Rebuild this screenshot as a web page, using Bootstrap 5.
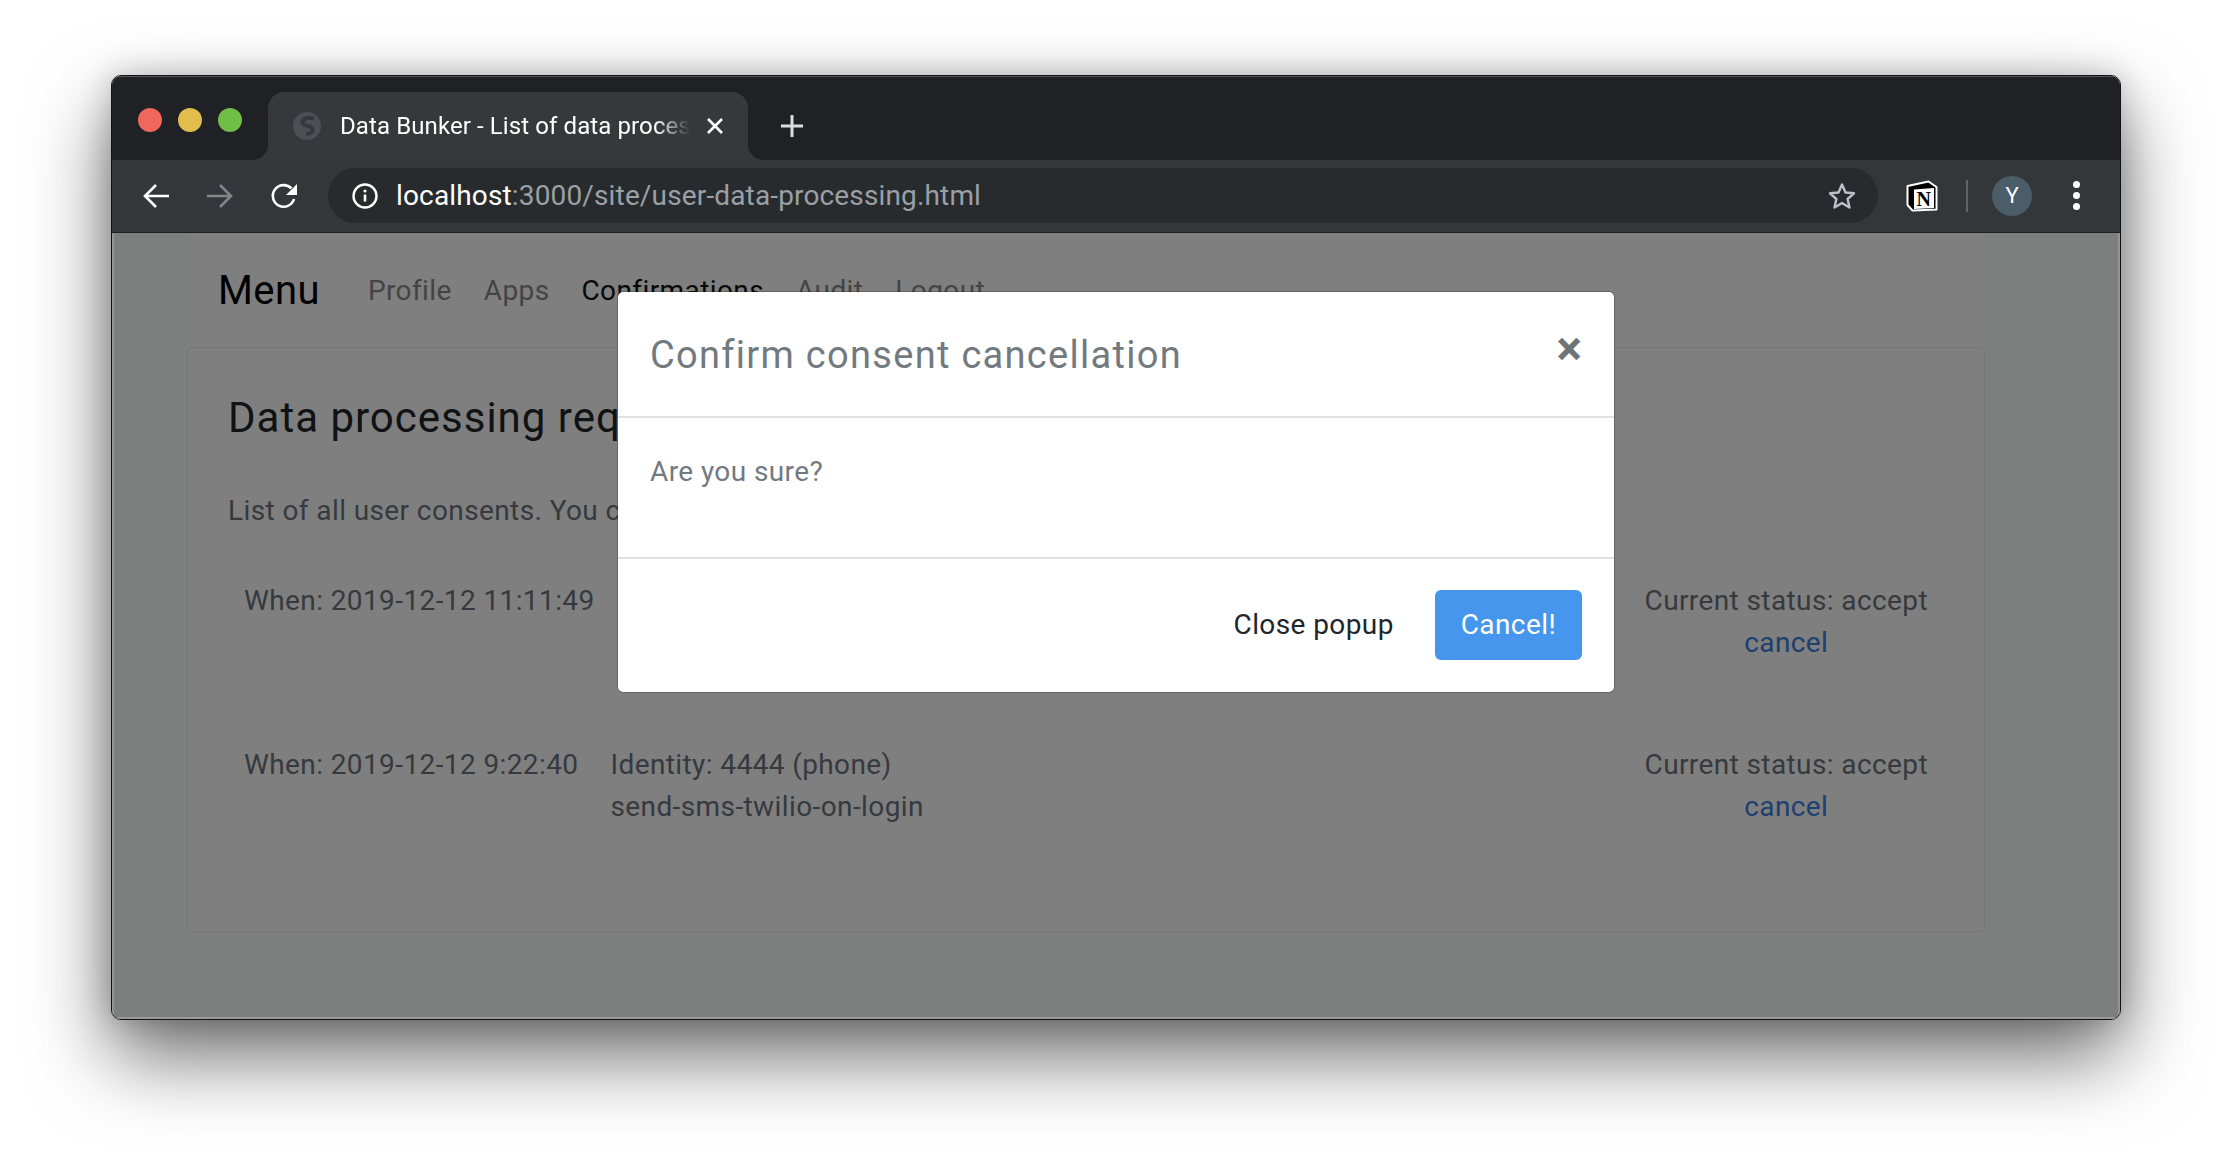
<!DOCTYPE html>
<html lang="en">
<head>
  <meta charset="UTF-8" />
  <title>Data Bunker - List of data processing</title>
  <link rel="stylesheet" href="https://cdn.jsdelivr.net/npm/bootstrap@5.3.3/dist/css/bootstrap.min.css" />
  <style>
    body { background: #fff; font-family: Roboto, "Liberation Sans", sans-serif; font-size: 28px; letter-spacing: .4px; color: #6c757d; }
    .desk { padding: 75px 111px 148px; }
    .browser { height: 945px; border-radius: 10px; overflow: hidden; background: #fbfefd; border: 1px solid #111; box-shadow: 0 36px 80px rgba(0,0,0,.58), 0 0 32px rgba(0,0,0,.2); }
    .tabstrip { height: 84px; background: #202124; padding-top: 16px; box-shadow: inset 0 1px #55585b; }
    .lights { width: 156px; padding: 16px 0 0 26px; gap: 16px; }
    .lights span { width: 24px; height: 24px; border-radius: 50%; }
    .tabitem { position: relative; width: 480px; height: 68px; background: #35393c; border-radius: 16px 16px 0 0; color: #fff; font-size: 24px; letter-spacing: .1px; padding: 0 23px 0 25px; }
    .tabitem::before, .tabitem::after { content: ""; position: absolute; bottom: 0; width: 16px; height: 16px; }
    .tabitem::before { left: -16px; background: radial-gradient(circle at 0 0, #202124 16px, #35393c 16.5px); }
    .tabitem::after { right: -16px; background: radial-gradient(circle at 100% 0, #202124 16px, #35393c 16.5px); }
    .tabtitle { width: 350px; white-space: nowrap; overflow: hidden; margin-left: 19px; -webkit-mask-image: linear-gradient(90deg, #000 90%, transparent); mask-image: linear-gradient(90deg, #000 90%, transparent); }
    .plusbtn { margin-left: 32px; }
    .toolbar { height: 73px; background: #33373a; border-bottom: 1px solid #1d1f21; padding: 8px 0 9px 12px; }
    .toolslot { width: 64px; }
    .addressbar { width: 1550px; height: 55px; border-radius: 28px; background: #282b2e; padding: 0 21px 0 24px; margin-left: 12px; font-size: 28px; letter-spacing: .15px; color: #9aa0a6; }
    .addressbar b { color: #fff; font-weight: 400; }
    .urlhost { margin: 1px 0 0 18px; }
    .notionslot { margin-left: 28px; }
    .sepline { width: 2px; height: 32px; background: #5f6368; margin-left: 28px; }
    .avatarchip { width: 40px; height: 40px; border-radius: 50%; background: #4a5d68; color: #fff; font-size: 22px; letter-spacing: 0; margin-left: 24px; }
    .dotsbox { margin-left: 41px; gap: 4px; }
    .dotsbox span { width: 7px; height: 7px; border-radius: 50%; background: #fff; }
    .pagearea { position: relative; height: 786px; padding: 0 135px 0 75px; overflow: hidden; }
    .topnav { height: 114px; background: #fff; padding: 2px 30px 0 31px; --bs-navbar-padding-y: 0; --bs-navbar-nav-link-padding-x: 16px; --bs-nav-link-padding-y: 0; }
    .topnav .navbar-brand { font-size: 40px; color: #000; margin-right: 32px; padding: 0; }
    .topnav .nav-link { color: #888; }
    .topnav .nav-link.active { color: #111; }
    .panel { height: 585px; --bs-card-border-color: #ececec; --bs-card-border-radius: 4px; }
    .panel .card-body { padding: 45px 40px 0; }
    .paneltitle { font-size: 42px; font-weight: 400; color: #212529; line-height: 1.2; margin: 0 0 47px; letter-spacing: 1px; }
    .panelnote { margin: 0 0 48px; line-height: 42px; }
    .consentrow { line-height: 42px; padding-bottom: 80px; }
    .consentrow a { color: #3f7fe0; text-decoration: none; }
    .dimlayer { position: absolute; inset: 0; background: rgba(0,0,0,.5); padding-top: 58px; box-shadow: inset 0 -2px #9a9a9a, inset 2px 0 #949494, inset -2px 0 #949494;
      --bs-modal-bg: #fff; --bs-modal-border-width: 1px; --bs-modal-border-color: rgba(0,0,0,.2); --bs-modal-border-radius: 6px; --bs-modal-inner-border-radius: 5px;
      --bs-modal-header-border-color: #dee2e6; --bs-modal-header-border-width: 2px; --bs-modal-footer-border-color: #dee2e6; --bs-modal-footer-border-width: 2px; --bs-modal-color: #72797f; }
    .popup { width: 998px; height: 402px; }
    .popup .modal-header { height: 126px; padding: 0 32px; align-items: flex-start; }
    .popup .modal-title { font-size: 38px; line-height: 1; color: #72797f; margin-top: 44px; letter-spacing: 1.3px; font-weight: 400; }
    .closex { background: none; border: 0; padding: 0; color: #6f7478; font-size: 48px; font-weight: 700; line-height: 1; margin-top: 33px; letter-spacing: 0; }
    .popup .modal-body { height: 139px; flex: none; padding: 33px 32px 0; line-height: 42px; }
    .popup .modal-footer { height: 133px; padding: 0 32px; gap: 27px; flex-wrap: nowrap; }
    .popup .modal-footer > * { margin: 0; }
    .popbtn { height: 70px; font-size: 28px; letter-spacing: .4px; padding: 0 26px; border: 0; border-radius: 6px; }
    .popbtn.btn-link { color: #212529; text-decoration: none; padding: 0 14px; }
    .popbtn.btn-primary { --bs-btn-bg: #4596ec; background: #4596ec; }
  </style>
</head>
<body>
  <div class="desk">
    <div class="browser d-flex flex-column">
      <div class="tabstrip d-flex">
        <div class="lights d-flex flex-shrink-0">
          <span style="background:#f1675d"></span>
          <span style="background:#e0bd4d"></span>
          <span style="background:#70bd48"></span>
        </div>
        <div class="tabitem d-flex align-items-center flex-shrink-0">
          <svg width="28" height="28" viewBox="0 0 28 28" class="flex-shrink-0"><circle cx="14" cy="14" r="14" fill="#4c4f53"/><path d="M21 6.500C16 4.500 9 6.500 9.500 10.500S17 13 19 16s-1 6-6 6" stroke="#35393c" stroke-width="4" fill="none"/></svg>
          <div class="tabtitle">Data Bunker - List of data processing</div>
          <svg width="20" height="20" viewBox="0 0 20 20" class="ms-auto flex-shrink-0"><path d="M3 3l14 14M17 3L3 17" stroke="#fff" stroke-width="2.6" fill="none"/></svg>
        </div>
        <svg width="24" height="24" viewBox="0 0 24 24" class="plusbtn align-self-center flex-shrink-0"><path d="M12 1v22M1 12h22" stroke="#dadce0" stroke-width="3" fill="none"/></svg>
      </div>
      <div class="toolbar d-flex align-items-center">
        <div class="toolslot d-flex justify-content-center">
          <svg width="28" height="26" viewBox="0 0 28 26"><path d="M27 13H3M14 2L3 13l11 11" stroke="#fff" stroke-width="2.6" fill="none"/></svg>
        </div>
        <div class="toolslot d-flex justify-content-center">
          <svg width="28" height="26" viewBox="0 0 28 26"><path d="M1 13h24M14 2l11 11-11 11" stroke="#80868b" stroke-width="2.6" fill="none"/></svg>
        </div>
        <div class="toolslot d-flex justify-content-center">
          <svg width="28" height="28" viewBox="0 0 28 28"><path d="M24 17a10.800 10.800 0 1 1-2.600-10.600" stroke="#fff" stroke-width="2.600" fill="none"/><path d="M27 2v11H16z" fill="#fff"/></svg>
        </div>
        <div class="addressbar d-flex align-items-center flex-shrink-0">
          <svg width="26" height="26" viewBox="0 0 26 26" class="flex-shrink-0"><circle cx="13" cy="13" r="11.500" stroke="#fff" stroke-width="2.400" fill="none"/><path d="M13 11.500v7" stroke="#fff" stroke-width="2.600"/><circle cx="13" cy="8" r="1.600" fill="#fff"/></svg>
          <span class="urlhost"><b>localhost</b>:3000/site/user-data-processing.html</span>
          <svg width="30" height="30" viewBox="0 0 30 30" class="ms-auto flex-shrink-0"><path d="M15 3.500l3.500 8 8.500.8-6.400 5.700 1.900 8.500L15 21.900l-7.500 4.600 1.900-8.500L3 12.300l8.500-.8z" stroke="#bdc1c6" stroke-width="2.400" fill="none" stroke-linejoin="round"/></svg>
        </div>
        <svg width="32" height="32" viewBox="0 0 32 32" class="notionslot flex-shrink-0">
          <path d="M1.500 6L22.500 1.500l8 5.500v22.500L6.500 30.500 1.500 25z" fill="#000" stroke="#fff" stroke-width="2" stroke-linejoin="round"/>
          <path d="M8 9.500l20-1.500v20L8 29z" fill="#fff"/>
          <text x="18" y="25.500" text-anchor="middle" font-family="Liberation Serif, serif" font-weight="700" font-size="20" fill="#000">N</text>
        </svg>
        <div class="sepline flex-shrink-0"></div>
        <div class="avatarchip d-flex align-items-center justify-content-center flex-shrink-0">Y</div>
        <div class="dotsbox d-flex flex-column flex-shrink-0"><span></span><span></span><span></span></div>
      </div>
      <div class="pagearea">
        <nav class="navbar navbar-expand topnav">
          <a class="navbar-brand" href="#">Menu</a>
          <div class="navbar-nav">
            <a class="nav-link" href="#">Profile</a>
            <a class="nav-link" href="#">Apps</a>
            <a class="nav-link active" href="#">Confirmations</a>
            <a class="nav-link" href="#">Audit</a>
            <a class="nav-link" href="#">Logout</a>
          </div>
        </nav>
        <div class="card panel">
          <div class="card-body">
            <h4 class="paneltitle">Data processing requests</h4>
            <p class="panelnote">List of all user consents. You can cancel them here.</p>
            <div class="consentrow d-flex">
              <div class="px-3 text-nowrap">When: 2019-12-12 11:11:49</div>
              <div class="px-3 flex-grow-1">Identity: 4444 (phone)<br />send-email-on-login</div>
              <div class="px-3 text-center text-nowrap">Current status: accept<br /><a href="#">cancel</a></div>
            </div>
            <div class="consentrow d-flex">
              <div class="px-3 text-nowrap">When: 2019-12-12 9:22:40</div>
              <div class="px-3 flex-grow-1">Identity: 4444 (phone)<br />send-sms-twilio-on-login</div>
              <div class="px-3 text-center text-nowrap">Current status: accept<br /><a href="#">cancel</a></div>
            </div>
          </div>
        </div>
        <div class="dimlayer d-flex justify-content-center align-items-start">
          <div class="modal-content popup">
            <div class="modal-header">
              <h5 class="modal-title">Confirm consent cancellation</h5>
              <button type="button" class="closex ms-auto">×</button>
            </div>
            <div class="modal-body">Are you sure?</div>
            <div class="modal-footer">
              <button type="button" class="btn btn-link popbtn">Close popup</button>
              <button type="button" class="btn btn-primary popbtn">Cancel!</button>
            </div>
          </div>
        </div>
      </div>
    </div>
  </div>
  <script src="https://cdn.jsdelivr.net/npm/bootstrap@5.3.3/dist/js/bootstrap.bundle.min.js"></script>
</body>
</html>
